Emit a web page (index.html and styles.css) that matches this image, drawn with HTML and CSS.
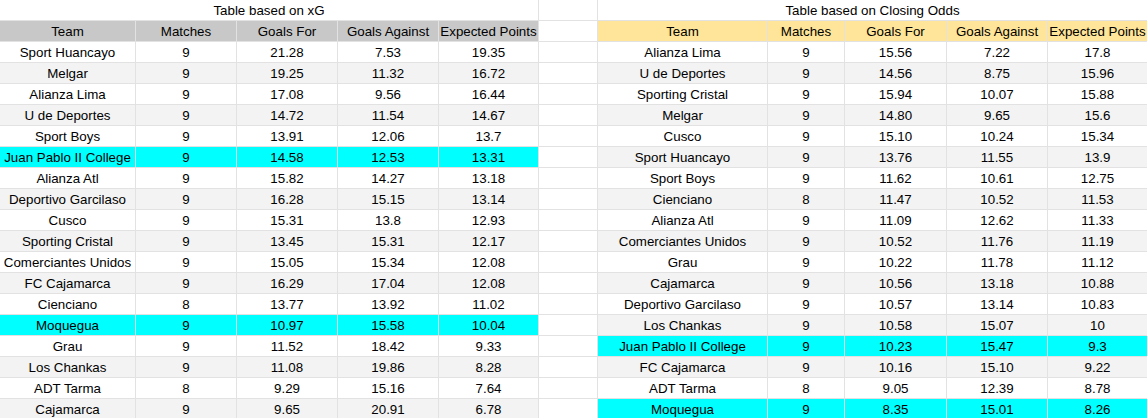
FILE: index.html
```html
<!DOCTYPE html>
<html>
<head>
<meta charset="utf-8">
<link rel="stylesheet" href="styles.css">
</head>
<body>
<div class="sheet" id="sheet">
  <div class="title span5">Table based on xG</div>
  <div class="gap"></div>
  <div class="title span5 last">Table based on Closing Odds</div>

  <div class="h gray">Team</div><div class="h gray">Matches</div><div class="h gray">Goals For</div><div class="h gray">Goals Against</div><div class="h gray">Expected Points</div>
  <div class="gap"></div>
  <div class="h yel">Team</div><div class="h yel">Matches</div><div class="h yel">Goals For</div><div class="h yel">Goals Against</div><div class="h yel last">Expected Points</div>
</div>
<script src="app.js"></script>
</body>
</html>
```

FILE: styles.css
```css
html, body {
  margin: 0;
  padding: 0;
  background: #ffffff;
}
body {
  font-family: "Liberation Sans", Arial, sans-serif;
  font-size: 13.33px;
  color: #000000;
}
.sheet {
  display: grid;
  grid-template-columns: 136px 101px 101px 101px 100px 59px 170px 77px 102px 101px 99px;
  grid-auto-rows: 21px;
  width: 1147px;
}
.sheet > div {
  box-sizing: border-box;
  border-right: 1px solid #e2e2e2;
  border-bottom: 1px solid #e2e2e2;
  text-align: center;
  line-height: 21px;
  white-space: nowrap;
  overflow: hidden;
}
.sheet > div.last {
  border-right: none;
}
.span5 {
  grid-column: span 5;
}
.title {
  background: #ffffff;
}
.gap {
  background: #ffffff;
}
.h.gray {
  background: #c8c8c8;
}
.h.yel {
  background: #ffe599;
}
.c.alt {
  background: #f3f3f3;
}
.c.hl {
  background: #00ffff;
}
```

FILE: app.js
```js
var left = [
  ["Sport Huancayo","9","21.28","7.53","19.35"],
  ["Melgar","9","19.25","11.32","16.72"],
  ["Alianza Lima","9","17.08","9.56","16.44"],
  ["U de Deportes","9","14.72","11.54","14.67"],
  ["Sport Boys","9","13.91","12.06","13.7"],
  ["Juan Pablo II College","9","14.58","12.53","13.31",1],
  ["Alianza Atl","9","15.82","14.27","13.18"],
  ["Deportivo Garcilaso","9","16.28","15.15","13.14"],
  ["Cusco","9","15.31","13.8","12.93"],
  ["Sporting Cristal","9","13.45","15.31","12.17"],
  ["Comerciantes Unidos","9","15.05","15.34","12.08"],
  ["FC Cajamarca","9","16.29","17.04","12.08"],
  ["Cienciano","8","13.77","13.92","11.02"],
  ["Moquegua","9","10.97","15.58","10.04",1],
  ["Grau","9","11.52","18.42","9.33"],
  ["Los Chankas","9","11.08","19.86","8.28"],
  ["ADT Tarma","8","9.29","15.16","7.64"],
  ["Cajamarca","9","9.65","20.91","6.78"]
];
var right = [
  ["Alianza Lima","9","15.56","7.22","17.8"],
  ["U de Deportes","9","14.56","8.75","15.96"],
  ["Sporting Cristal","9","15.94","10.07","15.88"],
  ["Melgar","9","14.80","9.65","15.6"],
  ["Cusco","9","15.10","10.24","15.34"],
  ["Sport Huancayo","9","13.76","11.55","13.9"],
  ["Sport Boys","9","11.62","10.61","12.75"],
  ["Cienciano","8","11.47","10.52","11.53"],
  ["Alianza Atl","9","11.09","12.62","11.33"],
  ["Comerciantes Unidos","9","10.52","11.76","11.19"],
  ["Grau","9","10.22","11.78","11.12"],
  ["Cajamarca","9","10.56","13.18","10.88"],
  ["Deportivo Garcilaso","9","10.57","13.14","10.83"],
  ["Los Chankas","9","10.58","15.07","10"],
  ["Juan Pablo II College","9","10.23","15.47","9.3",1],
  ["FC Cajamarca","9","10.16","15.10","9.22"],
  ["ADT Tarma","8","9.05","12.39","8.78"],
  ["Moquegua","9","8.35","15.01","8.26",1]
];
var sheet = document.getElementById("sheet");
function addCells(row, idx, isRight) {
  var cls = "c" + (row[5] ? " hl" : (idx % 2 === 1 ? " alt" : ""));
  for (var i = 0; i < 5; i++) {
    var d = document.createElement("div");
    d.className = cls + (isRight && i === 4 ? " last" : "");
    d.textContent = row[i];
    sheet.appendChild(d);
  }
}
for (var r = 0; r < left.length; r++) {
  addCells(left[r], r, false);
  var g = document.createElement("div");
  g.className = "gap";
  sheet.appendChild(g);
  addCells(right[r], r, true);
}
```
